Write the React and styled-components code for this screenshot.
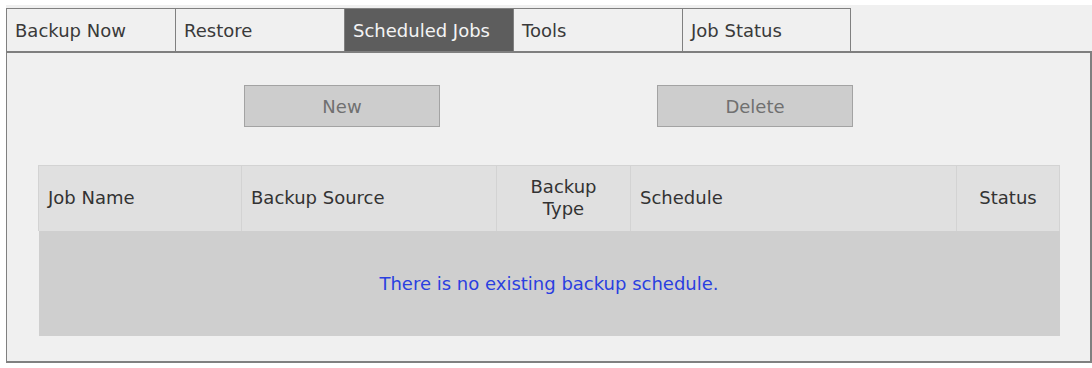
import React from 'react';
import styled, { createGlobalStyle } from 'styled-components';

const GlobalStyle = createGlobalStyle`
  html, body {
    margin: 0;
    padding: 0;
    background: #ffffff;
  }
  body {
    font-family: "DejaVu Sans", Verdana, sans-serif;
    font-size: 18px;
    color: #333333;
  }
`;

const tabs = ['Backup Now', 'Restore', 'Scheduled Jobs', 'Tools', 'Job Status'];

const columns = [
  { label: 'Job Name', width: 203, align: 'left' },
  { label: 'Backup Source', width: 255, align: 'left' },
  { label: ['Backup', 'Type'], width: 134, align: 'center' },
  { label: 'Schedule', width: 326, align: 'left' },
  { label: 'Status', width: 103, align: 'center' },
];

const App = () => {
  return (
    <>
      <GlobalStyle />
      <Page>
        <TabRow>
          {tabs.map((tab, i) => (
            <Tab key={tab} active={i === 2} last={i === tabs.length - 1}>
              {tab}
            </Tab>
          ))}
          <TabFiller />
        </TabRow>
        <Panel>
          <ButtonRow>
            <ActionButton type="button">New</ActionButton>
            <ActionButton type="button">Delete</ActionButton>
          </ButtonRow>
          <JobTable>
            <colgroup>
              {columns.map((col, i) => (
                <col key={i} style={{ width: col.width }} />
              ))}
            </colgroup>
            <thead>
              <tr>
                {columns.map((col, i) => (
                  <HeadCell key={i} align={col.align}>
                    {Array.isArray(col.label) ? (
                      <>
                        {col.label[0]}
                        <br />
                        {col.label[1]}
                      </>
                    ) : (
                      col.label
                    )}
                  </HeadCell>
                ))}
              </tr>
            </thead>
            <tbody>
              <tr>
                <EmptyCell colSpan={5}>There is no existing backup schedule.</EmptyCell>
              </tr>
            </tbody>
          </JobTable>
        </Panel>
      </Page>
    </>
  );
};

export default App;

const Page = styled.div`
  margin: 5px 0 0 6px;
  width: 1086px;
  padding-top: 3px;
  background: #f0f0f0;
`;

const TabRow = styled.div`
  display: flex;
  height: 43px;
`;

const Tab = styled.div`
  box-sizing: border-box;
  width: 169px;
  height: 43px;
  display: flex;
  align-items: center;
  padding-left: 8px;
  border-top: 1px solid #808080;
  border-left: 1px solid #808080;
  border-right: ${(p) => (p.last ? '1px solid #808080' : 'none')};
  background: ${(p) => (p.active ? '#5d5d5d' : '#f0f0f0')};
  color: ${(p) => (p.active ? '#f4f4f4' : '#3a3a3a')};
  white-space: nowrap;
`;

const TabFiller = styled.div`
  flex: 1;
`;

const Panel = styled.div`
  box-sizing: border-box;
  border-top: 2px solid #7f7f7f;
  border-left: 1px solid #808080;
  border-right: 2px solid #808080;
  border-bottom: 2px solid #808080;
  padding: 32px 31px 25px 31px;
`;

const ButtonRow = styled.div`
  display: flex;
  gap: 217px;
  padding-left: 206px;
  margin-bottom: 38px;
`;

const ActionButton = styled.button`
  box-sizing: border-box;
  width: 196px;
  height: 42px;
  background: #cdcdcd;
  border: 1px solid #a3a3a3;
  color: #707070;
  font-family: "DejaVu Sans", Verdana, sans-serif;
  font-size: 18px;
  padding: 0;
`;

const JobTable = styled.table`
  width: 1021px;
  border-collapse: collapse;
  table-layout: fixed;
`;

const HeadCell = styled.th`
  box-sizing: border-box;
  height: 65px;
  padding: 0 9px;
  background: #e0e0e0;
  border: 1px solid #d3d3d3;
  border-bottom: none;
  font-weight: normal;
  color: #333333;
  text-align: ${(p) => p.align};
  line-height: 22px;
`;

const EmptyCell = styled.td`
  height: 105px;
  background: #cfcfcf;
  text-align: center;
  color: #2a3fe0;
  padding: 0;
`;
